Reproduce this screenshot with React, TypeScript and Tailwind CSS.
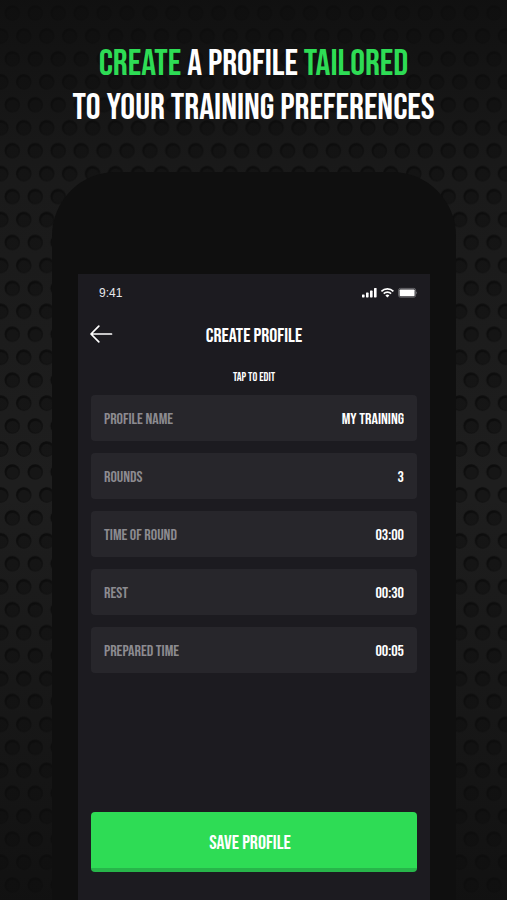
import React from 'react'

const fields = [
  { id: 'profile-name', label: 'PROFILE NAME', value: 'MY TRAINING' },
  { id: 'rounds', label: 'ROUNDS', value: '3' },
  { id: 'time-of-round', label: 'TIME OF ROUND', value: '03:00' },
  { id: 'rest', label: 'REST', value: '00:30' },
  { id: 'prepared-time', label: 'PREPARED TIME', value: '00:05' },
]

function Hole({ x, y }: { x: number; y: number }) {
  return (
    <g transform={`translate(${x} ${y})`}>
      <circle r="7.8" fill="url(#rim)" />
      <circle cx="0.3" cy="0.7" r="5.8" fill="#161616" />
    </g>
  )
}

function Backdrop() {
  return (
    <svg className="absolute inset-0 h-full w-full" aria-hidden="true">
      <defs>
        <linearGradient id="rim" x1="0" y1="0" x2="0.5" y2="1">
          <stop offset="0" stopColor="#0b0b0b" />
          <stop offset="1" stopColor="#131313" />
        </linearGradient>
        <linearGradient id="shade" x1="0" y1="0" x2="0" y2="1">
          <stop offset="0" stopColor="#0e0e0e" stopOpacity="0.85" />
          <stop offset="0.2" stopColor="#0e0e0e" stopOpacity="0.25" />
          <stop offset="0.55" stopColor="#0e0e0e" stopOpacity="0" />
          <stop offset="1" stopColor="#0e0e0e" stopOpacity="0.8" />
        </linearGradient>
        <pattern id="mesh" width="22.94" height="45.9" patternUnits="userSpaceOnUse">
          <rect width="22.94" height="45.9" fill="#1e1e1e" />
          <Hole x={12.3} y={13} />
          <Hole x={0.8} y={36} />
          <Hole x={23.74} y={36} />
        </pattern>
      </defs>
      <rect width="100%" height="100%" fill="url(#mesh)" />
      <rect width="100%" height="100%" fill="url(#shade)" />
    </svg>
  )
}

function StatusIcons() {
  return (
    <svg width="56" height="12" viewBox="0 0 56 12" fill="#fff" aria-hidden="true">
      <rect x="1" y="7.4" width="2.6" height="3" rx="0.6" />
      <rect x="5" y="5.6" width="2.6" height="4.8" rx="0.6" />
      <rect x="9" y="3.6" width="2.6" height="6.8" rx="0.6" />
      <rect x="13" y="1" width="2.6" height="9.4" rx="0.6" />
      <g fill="none" stroke="#fff" strokeWidth="1.7">
        <path d="M20.4 4.3a8.6 8.6 0 0 1 12 0" />
        <path d="M22.7 6.7a5.3 5.3 0 0 1 7.4 0" />
      </g>
      <path d="M26.4 10.6l-2-2.1a3 3 0 0 1 4 0z" />
      <rect x="37.6" y="1.4" width="17" height="8.8" rx="1.8" fill="none" stroke="#77777b" strokeWidth="0.8" />
      <rect x="38.6" y="2.4" width="15" height="6.8" rx="0.8" />
      <path d="M55.2 4.4v2.8q.8-.4.8-1.4t-.8-1.4z" fill="#77777b" />
    </svg>
  )
}

export default function App() {
  return (
    <main className="relative flex min-h-screen flex-col overflow-hidden bg-[#161616] font-['Bebas_Neue','Roboto_Condensed','Liberation_Sans_Narrow',sans-serif] text-white">
      <Backdrop />

      <h1 className="relative pt-[42px] text-center text-[37px] leading-[44px]">
        <span className="text-[#2edc55]">CREATE</span> A PROFILE{' '}
        <span className="text-[#2edc55]">TAILORED</span>
        <br />
        TO YOUR TRAINING PREFERENCES
      </h1>

      <div className="relative mt-[42px] mr-[51px] ml-[52px] flex flex-1 flex-col rounded-t-[64px] bg-[#0f0f0f] px-[26px] pt-[102px]">
        <section className="flex flex-1 flex-col bg-[#1c1b20] px-[13px] pb-7">
          <div className="flex h-[38px] items-center justify-between pl-2 font-['Liberation_Sans',sans-serif] text-xs text-gray-200">
            <span>9:41</span>
            <StatusIcons />
          </div>

          <header className="grid h-11 grid-cols-[24px_1fr_24px] items-center">
            <button type="button" aria-label="Back" className="-ml-0.5">
              <svg width="24" height="18" viewBox="0 0 24 18" fill="none" stroke="#fff" strokeWidth="1.7" strokeLinecap="round" strokeLinejoin="round">
                <path d="M22.5 9H2.5M9.8 1.2L2 9l7.8 7.8" />
              </svg>
            </button>
            <h2 className="pt-1 text-center text-xl">CREATE PROFILE</h2>
          </header>

          <p className="flex h-[39px] items-center justify-center pt-1 text-xs">TAP TO EDIT</p>

          <form className="flex flex-1 flex-col">
            <div className="flex flex-col gap-3">
              {fields.map((field) => (
                <div
                  key={field.id}
                  className="flex h-[46px] items-center justify-between rounded bg-[#27262b] px-[13px] pt-1 text-base"
                >
                  <label htmlFor={field.id} className="shrink-0 text-[#8c8b90]">
                    {field.label}
                  </label>
                  <input
                    id={field.id}
                    defaultValue={field.value}
                    className="w-24 bg-transparent text-right outline-none"
                  />
                </div>
              ))}
            </div>

            <button
              type="button"
              className="mt-auto h-[60px] rounded border-b-4 border-[#27b64a] bg-[#2edc55] pt-1.5 pr-2 text-xl"
            >
              SAVE PROFILE
            </button>
          </form>
        </section>
      </div>
    </main>
  )
}
